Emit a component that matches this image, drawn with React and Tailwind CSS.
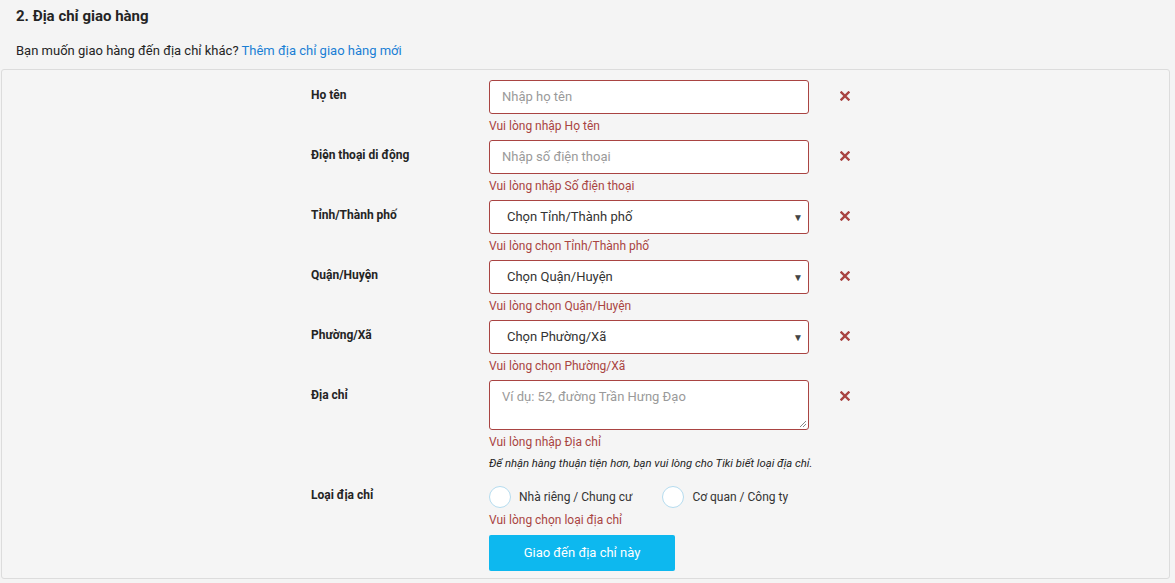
import React from "react";

const font = { fontFamily: "Roboto, 'Noto Sans', sans-serif" };

const ErrorX = () => (
  <div className="w-[60px] h-[32px] flex items-center pl-[31px]">
    <svg width="10" height="10" viewBox="0 0 10 10">
      <path d="M1.5 1.5 L8.5 8.5 M8.5 1.5 L1.5 8.5" stroke="#a94442" strokeWidth="2.4" strokeLinecap="square" />
    </svg>
  </div>
);

const Row = ({ label, children, error, last }) => (
  <div className="flex">
    <div className="w-[178px] pt-[6px] text-[12px] font-bold text-[#242424]">{label}</div>
    <div className="w-[320px]">
      {children}
      <div className={`mt-[4px] ${last ? "" : "mb-[6px]"} text-[12px] leading-[16px] text-[#a94442]`}>{error}</div>
    </div>
    <ErrorX />
  </div>
);

const TextInput = ({ placeholder }) => (
  <div className="h-[34px] border border-[#a94442] rounded-[3px] bg-white flex items-center px-[12px] text-[13px] text-[#9a9a9a]">
    {placeholder}
  </div>
);

const SelectBox = ({ value }) => (
  <div className="h-[34px] border border-[#a94442] rounded-[3px] bg-white flex items-center justify-between pl-[17px] pr-[5px] text-[13px] text-[#333]">
    <span>{value}</span>
    <span className="text-[10px] text-[#444]">▼</span>
  </div>
);

const Radio = ({ label }) => (
  <div className="flex items-center">
    <div className="w-[22px] h-[22px] rounded-full border border-[#b5dcef] bg-white" />
    <span className="ml-[8px] text-[12px] text-[#333]">{label}</span>
  </div>
);

export default function App() {
  return (
    <div className="min-h-screen bg-[#f4f4f4] pb-[4px]" style={font}>
      <div className="px-[16px] pt-[6px]">
        <h3 className="text-[15px] font-bold text-[#242424] leading-[20px]">2. Địa chỉ giao hàng</h3>
        <p className="mt-[17px] text-[13px] text-[#242424] leading-[16px]">
          Bạn muốn giao hàng đến địa chỉ khác?{" "}
          <span className="text-[#1a7fd4]">Thêm địa chỉ giao hàng mới</span>
        </p>
      </div>

      <div className="mt-[10px] ml-[1px] mr-[5px] border border-[#dcdcdc] rounded-[3px] bg-[#f5f5f5] pl-[309px] pt-[10px] pb-[7px]">
        <Row label="Họ tên" error="Vui lòng nhập Họ tên">
          <TextInput placeholder="Nhập họ tên" />
        </Row>
        <Row label="Điện thoại di động" error="Vui lòng nhập Số điện thoại">
          <TextInput placeholder="Nhập số điện thoại" />
        </Row>
        <Row label="Tỉnh/Thành phố" error="Vui lòng chọn Tỉnh/Thành phố">
          <SelectBox value="Chọn Tỉnh/Thành phố" />
        </Row>
        <Row label="Quận/Huyện" error="Vui lòng chọn Quận/Huyện">
          <SelectBox value="Chọn Quận/Huyện" />
        </Row>
        <Row label="Phường/Xã" error="Vui lòng chọn Phường/Xã">
          <SelectBox value="Chọn Phường/Xã" />
        </Row>
        <Row label="Địa chỉ" error="Vui lòng nhập Địa chỉ" last>
          <div className="relative h-[50px] border border-[#a94442] rounded-[3px] bg-white px-[12px] pt-[6px] text-[13px] text-[#9a9a9a]">
            Ví dụ: 52, đường Trần Hưng Đạo
            <svg className="absolute right-[1px] bottom-[1px]" width="8" height="8" viewBox="0 0 8 8">
              <path d="M7 1 L1 7 M7 4 L4 7" stroke="#888" strokeWidth="1" />
            </svg>
          </div>
        </Row>
        <div className="ml-[178px] mt-[6px] text-[11.3px] italic leading-[16px] text-[#242424]">
          Để nhận hàng thuận tiện hơn, bạn vui lòng cho Tiki biết loại địa chỉ.
        </div>
        <div className="flex mt-[14px]">
          <div className="w-[178px] text-[12px] font-bold text-[#242424]">Loại địa chỉ</div>
          <div>
            <div className="flex gap-[30px]">
              <Radio label="Nhà riêng / Chung cư" />
              <Radio label="Cơ quan / Công ty" />
            </div>
            <div className="mt-[4px] text-[12px] leading-[16px] text-[#a94442]">Vui lòng chọn loại địa chỉ</div>
            <button className="mt-[7px] w-[186px] h-[36px] rounded-[2px] bg-[#0db8ef] text-white text-[13px]">
              Giao đến địa chỉ này
            </button>
          </div>
        </div>
      </div>
    </div>
  );
}
